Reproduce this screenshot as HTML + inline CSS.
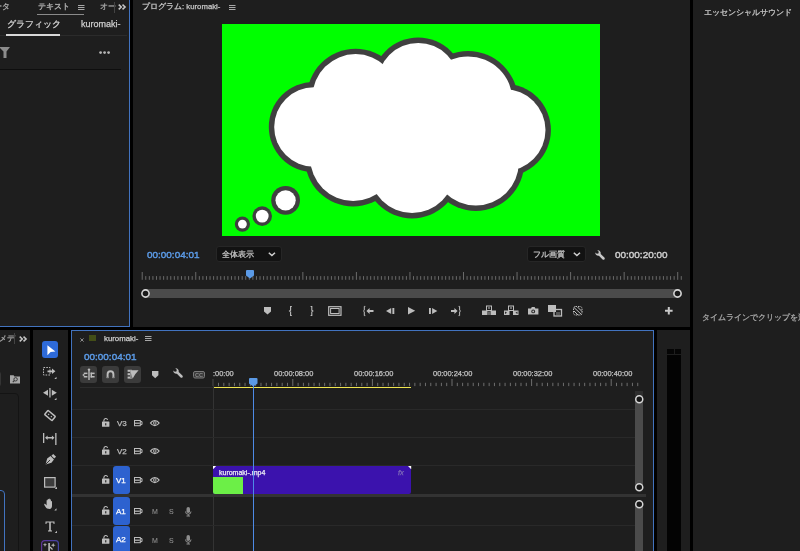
<!DOCTYPE html>
<html><head><meta charset="utf-8">
<style>
*{margin:0;padding:0;box-sizing:border-box}
html,body{width:800px;height:551px;overflow:hidden;background:#000;font-family:"Liberation Sans",sans-serif;color:#bdbdbd;position:relative}
.a{position:absolute}
.p{position:absolute;background:#1e1e1e;overflow:hidden}
.t{position:absolute;white-space:nowrap;line-height:1;-webkit-text-stroke:0.25px currentColor;will-change:transform}
svg{position:absolute;overflow:visible}
</style></head><body>

<div class="p" style="left:0;top:0;width:130px;height:327px;border-right:1px solid #4273bf;border-bottom:1px solid #4273bf"></div>
<div class="p" style="left:133px;top:0;width:557px;height:327px"></div>
<div class="p" style="left:693px;top:0;width:107px;height:551px"></div>
<div class="p" style="left:0;top:330px;width:30px;height:221px"></div>
<div class="p" style="left:33px;top:330px;width:35px;height:221px"></div>
<div class="p" style="left:71px;top:330px;width:583px;height:221px;border:1px solid #4273bf;border-bottom:none"></div>
<div class="p" style="left:657px;top:330px;width:33px;height:221px"></div>
<div class="t" style="left:-6.00px;top:3.46px;font-size:8.2px;color:#b4b4b4;font-weight:normal;">ータ</div>
<div class="t" style="left:38.00px;top:3.43px;font-size:8px;color:#bcbcbc;font-weight:normal;">テキスト</div>
<svg style="left:78px;top:5px;" width="7" height="6" viewBox="0 0 7 6"><g fill="#a8a8a8"><rect x="0" y="0" width="6.5" height="1"/><rect x="0" y="2" width="6.5" height="1"/><rect x="0" y="4" width="6.5" height="1"/></g></svg>
<div class="a" style="left:37px;top:13.5px;width:47px;height:1.5px;background:#8a8a8a;"></div>
<div class="t" style="left:100.00px;top:3.43px;font-size:8px;color:#a9a9a9;font-weight:normal;">オー</div>
<div class="a" style="left:114px;top:2px;width:1px;height:10.5px;background:#444;"></div>
<svg style="left:118.3px;top:4.2px;" width="9" height="6" viewBox="0 0 9 6"><path d="M.7 .6L3.3 3L.7 5.4M4.5 .6L7.1 3L4.5 5.4" fill="none" stroke="#c8c8c8" stroke-width="1.5"/></svg>
<div class="a" style="left:0px;top:35px;width:127px;height:1px;background:#2b2b2b;"></div>
<div class="t" style="left:7.00px;top:19.93px;font-size:9.3px;color:#d2d2d2;font-weight:normal;">グラフィック</div>
<div class="t" style="left:81.00px;top:20.18px;font-size:9px;color:#cfcfcf;font-weight:normal;">kuromaki-</div>
<div class="a" style="left:6px;top:34px;width:54px;height:2px;background:#d8d8d8;"></div>
<svg style="left:0px;top:47px;" width="11" height="12" viewBox="0 0 11 12"><path d="M-1 0H10L6.5 4.5V11H3.5V4.5Z" fill="#8c8c8c"/></svg>
<svg style="left:99px;top:51px;" width="13" height="4" viewBox="0 0 13 4"><circle cx="1.6" cy="1.6" r="1.4" fill="#b5b5b5"/><circle cx="5.6" cy="1.6" r="1.4" fill="#b5b5b5"/><circle cx="9.6" cy="1.6" r="1.4" fill="#b5b5b5"/></svg>
<div class="a" style="left:0px;top:69px;width:121px;height:1px;background:#0e0e0e;"></div>
<div class="t" style="left:141.75px;top:3.40px;font-size:7.8px;color:#c8c8c8;font-weight:normal;">プログラム: <span style="font-size:7.75px">kuromaki-</span></div>
<svg style="left:229px;top:5px;" width="7" height="6" viewBox="0 0 7 6"><g fill="#a8a8a8"><rect x="0" y="0" width="6.5" height="1"/><rect x="0" y="2" width="6.5" height="1"/><rect x="0" y="4" width="6.5" height="1"/></g></svg>
<svg style="left:222px;top:24px;" width="378" height="212" viewBox="0 0 378 212"><rect width="378" height="212" fill="#00ff00"/><g fill="#404040"><circle cx="133.6" cy="73.3" r="48.6"/><circle cx="196.2" cy="59.9" r="46.3"/><circle cx="246.0" cy="77.0" r="50.0"/><circle cx="282.6" cy="106.1" r="46.3"/><circle cx="253.8" cy="138.6" r="48.4"/><circle cx="190.1" cy="146.4" r="48.0"/><circle cx="131.2" cy="134.2" r="48.3"/><circle cx="91.9" cy="103.0" r="45.1"/><circle cx="63.6" cy="176.3" r="14.4"/><circle cx="40.2" cy="192.1" r="9.8"/><circle cx="20.4" cy="200.1" r="7.6"/></g><g fill="#fff"><circle cx="133.6" cy="73.3" r="43.2"/><circle cx="196.2" cy="59.9" r="40.9"/><circle cx="246.0" cy="77.0" r="44.6"/><circle cx="282.6" cy="106.1" r="40.9"/><circle cx="253.8" cy="138.6" r="43.0"/><circle cx="190.1" cy="146.4" r="42.6"/><circle cx="131.2" cy="134.2" r="42.9"/><circle cx="91.9" cy="103.0" r="39.7"/><circle cx="63.6" cy="176.3" r="10.1"/><circle cx="40.2" cy="192.1" r="6.4"/><circle cx="20.4" cy="200.1" r="4.4"/><rect x="89" y="73.9" width="193.60000000000002" height="64.69999999999999"/></g></svg>
<div class="t" style="left:146.50px;top:249.68px;font-size:9.95px;color:#5b9ae6;font-weight:normal;-webkit-text-stroke:0.45px currentColor">00:00:04:01</div>
<div class="a" style="left:216px;top:246.3px;width:65.7px;height:15.6px;background:#121212;border-radius:3px;border:1px solid #262626"></div>
<div class="t" style="left:222.00px;top:251.02px;font-size:8.25px;color:#c6c6c6;font-weight:normal;">全体表示</div>
<svg style="left:268px;top:252.3px;" width="8" height="5" viewBox="0 0 8 5"><path d="M.8 .8L3.9 3.6L7 .8" fill="none" stroke="#d0d0d0" stroke-width="1.5"/></svg>
<div class="a" style="left:526.6px;top:246.3px;width:59.4px;height:15.6px;background:#121212;border-radius:3px;border:1px solid #262626"></div>
<div class="t" style="left:533.00px;top:251.23px;font-size:8px;color:#c6c6c6;font-weight:normal;">フル画質</div>
<svg style="left:573px;top:252.3px;" width="8" height="5" viewBox="0 0 8 5"><path d="M.8 .8L3.9 3.6L7 .8" fill="none" stroke="#d0d0d0" stroke-width="1.5"/></svg>
<svg style="left:595.4px;top:249.6px;" width="10" height="10" viewBox="0 0 10 10"><g transform="translate(10 0) scale(-1 1)"><path d="M7.6 .4A2.9 2.9 0 0 0 4.3 3.9L.6 7.6A1 1 0 0 0 2.4 9.4L6.1 5.7A2.9 2.9 0 0 0 9.6 2.4L8.2 3.8L6.6 3.4L6.2 1.8Z" fill="#c8c8c8"/></g></svg>
<div class="t" style="left:614.50px;top:249.68px;font-size:9.95px;color:#cccccc;font-weight:normal;-webkit-text-stroke:0.45px currentColor">00:00:20:00</div>
<svg style="left:133px;top:271.6px;" width="557" height="8" viewBox="0 0 557 8"><g fill="#6a6a6a"><rect x="8.70" y="0" width="1" height="7.8"/><rect x="12.27" y="4.1" width="1" height="3.7"/><rect x="15.84" y="4.1" width="1" height="3.7"/><rect x="19.41" y="4.1" width="1" height="3.7"/><rect x="22.98" y="4.1" width="1" height="3.7"/><rect x="26.55" y="4.1" width="1" height="3.7"/><rect x="30.12" y="4.1" width="1" height="3.7"/><rect x="33.69" y="4.1" width="1" height="3.7"/><rect x="37.26" y="4.1" width="1" height="3.7"/><rect x="40.83" y="4.1" width="1" height="3.7"/><rect x="44.40" y="4.1" width="1" height="3.7"/><rect x="47.97" y="4.1" width="1" height="3.7"/><rect x="51.54" y="4.1" width="1" height="3.7"/><rect x="55.11" y="4.1" width="1" height="3.7"/><rect x="58.68" y="4.1" width="1" height="3.7"/><rect x="62.25" y="0" width="1" height="7.8"/><rect x="65.82" y="4.1" width="1" height="3.7"/><rect x="69.39" y="4.1" width="1" height="3.7"/><rect x="72.96" y="4.1" width="1" height="3.7"/><rect x="76.53" y="4.1" width="1" height="3.7"/><rect x="80.10" y="4.1" width="1" height="3.7"/><rect x="83.67" y="4.1" width="1" height="3.7"/><rect x="87.24" y="4.1" width="1" height="3.7"/><rect x="90.81" y="4.1" width="1" height="3.7"/><rect x="94.38" y="4.1" width="1" height="3.7"/><rect x="97.95" y="4.1" width="1" height="3.7"/><rect x="101.52" y="4.1" width="1" height="3.7"/><rect x="105.09" y="4.1" width="1" height="3.7"/><rect x="108.66" y="4.1" width="1" height="3.7"/><rect x="112.23" y="4.1" width="1" height="3.7"/><rect x="115.80" y="0" width="1" height="7.8"/><rect x="119.37" y="4.1" width="1" height="3.7"/><rect x="122.94" y="4.1" width="1" height="3.7"/><rect x="126.51" y="4.1" width="1" height="3.7"/><rect x="130.08" y="4.1" width="1" height="3.7"/><rect x="133.65" y="4.1" width="1" height="3.7"/><rect x="137.22" y="4.1" width="1" height="3.7"/><rect x="140.79" y="4.1" width="1" height="3.7"/><rect x="144.36" y="4.1" width="1" height="3.7"/><rect x="147.93" y="4.1" width="1" height="3.7"/><rect x="151.50" y="4.1" width="1" height="3.7"/><rect x="155.07" y="4.1" width="1" height="3.7"/><rect x="158.64" y="4.1" width="1" height="3.7"/><rect x="162.21" y="4.1" width="1" height="3.7"/><rect x="165.78" y="4.1" width="1" height="3.7"/><rect x="169.35" y="0" width="1" height="7.8"/><rect x="172.92" y="4.1" width="1" height="3.7"/><rect x="176.49" y="4.1" width="1" height="3.7"/><rect x="180.06" y="4.1" width="1" height="3.7"/><rect x="183.63" y="4.1" width="1" height="3.7"/><rect x="187.20" y="4.1" width="1" height="3.7"/><rect x="190.77" y="4.1" width="1" height="3.7"/><rect x="194.34" y="4.1" width="1" height="3.7"/><rect x="197.91" y="4.1" width="1" height="3.7"/><rect x="201.48" y="4.1" width="1" height="3.7"/><rect x="205.05" y="4.1" width="1" height="3.7"/><rect x="208.62" y="4.1" width="1" height="3.7"/><rect x="212.19" y="4.1" width="1" height="3.7"/><rect x="215.76" y="4.1" width="1" height="3.7"/><rect x="219.33" y="4.1" width="1" height="3.7"/><rect x="222.90" y="0" width="1" height="7.8"/><rect x="226.47" y="4.1" width="1" height="3.7"/><rect x="230.04" y="4.1" width="1" height="3.7"/><rect x="233.61" y="4.1" width="1" height="3.7"/><rect x="237.18" y="4.1" width="1" height="3.7"/><rect x="240.75" y="4.1" width="1" height="3.7"/><rect x="244.32" y="4.1" width="1" height="3.7"/><rect x="247.89" y="4.1" width="1" height="3.7"/><rect x="251.46" y="4.1" width="1" height="3.7"/><rect x="255.03" y="4.1" width="1" height="3.7"/><rect x="258.60" y="4.1" width="1" height="3.7"/><rect x="262.17" y="4.1" width="1" height="3.7"/><rect x="265.74" y="4.1" width="1" height="3.7"/><rect x="269.31" y="4.1" width="1" height="3.7"/><rect x="272.88" y="4.1" width="1" height="3.7"/><rect x="276.45" y="0" width="1" height="7.8"/><rect x="280.02" y="4.1" width="1" height="3.7"/><rect x="283.59" y="4.1" width="1" height="3.7"/><rect x="287.16" y="4.1" width="1" height="3.7"/><rect x="290.73" y="4.1" width="1" height="3.7"/><rect x="294.30" y="4.1" width="1" height="3.7"/><rect x="297.87" y="4.1" width="1" height="3.7"/><rect x="301.44" y="4.1" width="1" height="3.7"/><rect x="305.01" y="4.1" width="1" height="3.7"/><rect x="308.58" y="4.1" width="1" height="3.7"/><rect x="312.15" y="4.1" width="1" height="3.7"/><rect x="315.72" y="4.1" width="1" height="3.7"/><rect x="319.29" y="4.1" width="1" height="3.7"/><rect x="322.86" y="4.1" width="1" height="3.7"/><rect x="326.43" y="4.1" width="1" height="3.7"/><rect x="330.00" y="0" width="1" height="7.8"/><rect x="333.57" y="4.1" width="1" height="3.7"/><rect x="337.14" y="4.1" width="1" height="3.7"/><rect x="340.71" y="4.1" width="1" height="3.7"/><rect x="344.28" y="4.1" width="1" height="3.7"/><rect x="347.85" y="4.1" width="1" height="3.7"/><rect x="351.42" y="4.1" width="1" height="3.7"/><rect x="354.99" y="4.1" width="1" height="3.7"/><rect x="358.56" y="4.1" width="1" height="3.7"/><rect x="362.13" y="4.1" width="1" height="3.7"/><rect x="365.70" y="4.1" width="1" height="3.7"/><rect x="369.27" y="4.1" width="1" height="3.7"/><rect x="372.84" y="4.1" width="1" height="3.7"/><rect x="376.41" y="4.1" width="1" height="3.7"/><rect x="379.98" y="4.1" width="1" height="3.7"/><rect x="383.55" y="0" width="1" height="7.8"/><rect x="387.12" y="4.1" width="1" height="3.7"/><rect x="390.69" y="4.1" width="1" height="3.7"/><rect x="394.26" y="4.1" width="1" height="3.7"/><rect x="397.83" y="4.1" width="1" height="3.7"/><rect x="401.40" y="4.1" width="1" height="3.7"/><rect x="404.97" y="4.1" width="1" height="3.7"/><rect x="408.54" y="4.1" width="1" height="3.7"/><rect x="412.11" y="4.1" width="1" height="3.7"/><rect x="415.68" y="4.1" width="1" height="3.7"/><rect x="419.25" y="4.1" width="1" height="3.7"/><rect x="422.82" y="4.1" width="1" height="3.7"/><rect x="426.39" y="4.1" width="1" height="3.7"/><rect x="429.96" y="4.1" width="1" height="3.7"/><rect x="433.53" y="4.1" width="1" height="3.7"/><rect x="437.10" y="0" width="1" height="7.8"/><rect x="440.67" y="4.1" width="1" height="3.7"/><rect x="444.24" y="4.1" width="1" height="3.7"/><rect x="447.81" y="4.1" width="1" height="3.7"/><rect x="451.38" y="4.1" width="1" height="3.7"/><rect x="454.95" y="4.1" width="1" height="3.7"/><rect x="458.52" y="4.1" width="1" height="3.7"/><rect x="462.09" y="4.1" width="1" height="3.7"/><rect x="465.66" y="4.1" width="1" height="3.7"/><rect x="469.23" y="4.1" width="1" height="3.7"/><rect x="472.80" y="4.1" width="1" height="3.7"/><rect x="476.37" y="4.1" width="1" height="3.7"/><rect x="479.94" y="4.1" width="1" height="3.7"/><rect x="483.51" y="4.1" width="1" height="3.7"/><rect x="487.08" y="4.1" width="1" height="3.7"/><rect x="490.65" y="0" width="1" height="7.8"/><rect x="494.22" y="4.1" width="1" height="3.7"/><rect x="497.79" y="4.1" width="1" height="3.7"/><rect x="501.36" y="4.1" width="1" height="3.7"/><rect x="504.93" y="4.1" width="1" height="3.7"/><rect x="508.50" y="4.1" width="1" height="3.7"/><rect x="512.07" y="4.1" width="1" height="3.7"/><rect x="515.64" y="4.1" width="1" height="3.7"/><rect x="519.21" y="4.1" width="1" height="3.7"/><rect x="522.78" y="4.1" width="1" height="3.7"/><rect x="526.35" y="4.1" width="1" height="3.7"/><rect x="529.92" y="4.1" width="1" height="3.7"/><rect x="533.49" y="4.1" width="1" height="3.7"/><rect x="537.06" y="4.1" width="1" height="3.7"/><rect x="540.63" y="4.1" width="1" height="3.7"/><rect x="544.20" y="0" width="1" height="7.8"/><rect x="547.77" y="4.1" width="1" height="3.7"/></g></svg>
<svg style="left:246px;top:270px;" width="8" height="9" viewBox="0 0 8 9"><path d="M0 1A1 1 0 0 1 1 0H7A1 1 0 0 1 8 1V5.5L4 8.5L0 5.5Z" fill="#5b9ae6"/></svg>
<div class="a" style="left:141.5px;top:289px;width:540.5px;height:9px;background:#4b4b4b;border-radius:4.5px"></div>
<svg style="left:141.1px;top:289px;" width="9" height="9" viewBox="0 0 9 9"><circle cx="4.5" cy="4.5" r="3.6" fill="#1a1a1a" stroke="#d6d6d6" stroke-width="1.6"/></svg>
<svg style="left:673.2px;top:289px;" width="9" height="9" viewBox="0 0 9 9"><circle cx="4.5" cy="4.5" r="3.6" fill="#1a1a1a" stroke="#d6d6d6" stroke-width="1.6"/></svg>
<svg style="left:264.3px;top:307px;" width="7" height="7.5" viewBox="0 0 7 7.5"><path d="M0 0H7V4.5L3.5 7.5L0 4.5Z" fill="#bdbdbd"/></svg>
<svg style="left:289px;top:306px;" width="4" height="10" viewBox="0 0 4 10"><path d="M2.8 .5H1.6V4.3L.6 5L1.6 5.7V9.5H2.8" fill="none" stroke="#bdbdbd" stroke-width="1.1"/></svg>
<svg style="left:309.5px;top:306px;" width="4" height="10" viewBox="0 0 4 10"><path d="M.6 .5H1.8V4.3L2.8 5L1.8 5.7V9.5H.6" fill="none" stroke="#bdbdbd" stroke-width="1.1"/></svg>
<svg style="left:327.7px;top:305.8px;" width="14" height="10" viewBox="0 0 14 10"><rect x=".7" y=".7" width="12.3" height="8.6" fill="none" stroke="#bdbdbd" stroke-width="1.2"/><rect x="2.6" y="2.5" width="8.5" height="5" fill="none" stroke="#bdbdbd" stroke-width="1"/></svg>
<svg style="left:362.6px;top:305.5px;" width="11" height="10" viewBox="0 0 11 10"><path d="M2.3 .4H1.3V4.3L.4 5L1.3 5.7V9.6H2.3" fill="none" stroke="#bdbdbd" stroke-width="1"/><path d="M3.4 5L6.6 1.9V3.9H10.5V6.1H6.6V8.1Z" fill="#bdbdbd"/></svg>
<svg style="left:385.7px;top:308px;" width="9" height="6" viewBox="0 0 9 6"><path d="M5.2 0V6L0 3Z" fill="#bdbdbd"/><rect x="6.4" y="0" width="1.9" height="6" fill="#bdbdbd"/></svg>
<svg style="left:407.8px;top:307px;" width="8" height="7.5" viewBox="0 0 8 7.5"><path d="M0 0L7.2 3.75L0 7.5Z" fill="#bdbdbd"/></svg>
<svg style="left:429.2px;top:308px;" width="9" height="6" viewBox="0 0 9 6"><rect x="0" y="0" width="1.9" height="6" fill="#bdbdbd"/><path d="M3.1 0V6L8.3 3Z" fill="#bdbdbd"/></svg>
<svg style="left:450.7px;top:305.5px;" width="11" height="10" viewBox="0 0 11 10"><path d="M7.6 .4H8.6V4.3L9.6 5L8.6 5.7V9.6H7.6" fill="none" stroke="#bdbdbd" stroke-width="1"/><path d="M6.6 5L3.4 1.9V3.9H0V6.1H3.4V8.1Z" fill="#bdbdbd"/></svg>
<svg style="left:481.7px;top:305.5px;" width="14" height="9" viewBox="0 0 14 9"><rect x="4.5" y="0" width="5" height="4.5" fill="none" stroke="#bdbdbd" stroke-width="1"/><rect x="6" y="1.5" width="2" height="1" fill="#bdbdbd"/><rect x="0" y="4.5" width="5.5" height="4.5" fill="#bdbdbd"/><rect x="8.5" y="4.5" width="5.5" height="4.5" fill="#bdbdbd"/><rect x="5.5" y="5.5" width="3" height="3.5" fill="#6a6a6a"/></svg>
<svg style="left:503.7px;top:305.5px;" width="15" height="9" viewBox="0 0 15 9"><rect x="4.5" y="0" width="5" height="4.5" fill="none" stroke="#bdbdbd" stroke-width="1"/><rect x="6" y="1.5" width="2" height="1" fill="#bdbdbd"/><rect x="0" y="4.5" width="5.5" height="4.5" fill="#bdbdbd"/><rect x="9" y="4.5" width="5.5" height="4.5" fill="#bdbdbd"/><path d="M1 5.5L3 6.75L1 8Z" fill="#2a2a2a"/><path d="M13.5 5.5L11.5 6.75L13.5 8Z" fill="#2a2a2a"/></svg>
<svg style="left:527.8px;top:306.8px;" width="11" height="8" viewBox="0 0 11 8"><path d="M0 1.6H3L3.8 0H6.6L7.4 1.6H10.4V7.4H0Z" fill="#bdbdbd"/><circle cx="5.2" cy="4.4" r="1.9" fill="#2a2a2a"/><circle cx="5.2" cy="4.4" r=".9" fill="#bdbdbd"/></svg>
<svg style="left:548px;top:304.8px;" width="14" height="11.5" viewBox="0 0 14 11.5"><rect x="0" y="0" width="8" height="7" fill="#bdbdbd"/><rect x="6" y="4.5" width="7.5" height="6.5" fill="none" stroke="#bdbdbd" stroke-width="1.3"/><rect x="8" y="7" width="4" height="3" fill="#555"/></svg>
<svg style="left:573px;top:306px;" width="10" height="9.5" viewBox="0 0 10 9.5"><g fill="none" stroke="#bdbdbd" stroke-width="1"><path d="M1 1.5L8.5 8.5M1 5L5 9M4.5 1L9 5.5"/><rect x=".5" y=".5" width="8.5" height="8.5" rx="2" stroke-dasharray="1.5 1"/></g></svg>
<svg style="left:665px;top:307px;" width="8" height="8" viewBox="0 0 8 8"><path d="M3.8 0V7.6M0 3.8H7.6" stroke="#c8c8c8" stroke-width="2"/></svg>
<div class="t" style="left:704.00px;top:8.86px;font-size:8.2px;color:#c8c8c8;font-weight:normal;">エッセンシャルサウンド</div>
<div class="t" style="left:701.80px;top:313.94px;font-size:8.1px;color:#a8a8a8;font-weight:normal;">タイムラインでクリップを選択</div>
<div class="t" style="left:-1.00px;top:335.03px;font-size:8px;color:#a9a9a9;font-weight:normal;">メデ</div>
<div class="a" style="left:14px;top:333px;width:1px;height:11px;background:#444;"></div>
<svg style="left:19px;top:336px;" width="9" height="6" viewBox="0 0 9 6"><path d="M.7 .6L3.3 3L.7 5.4M4.5 .6L7.1 3L4.5 5.4" fill="none" stroke="#c8c8c8" stroke-width="1.5"/></svg>
<div class="a" style="left:-20px;top:371px;width:21px;height:15.5px;background:transparent;border:1px solid #343434;border-radius:3px"></div>
<svg style="left:10px;top:374.8px;" width="10" height="8.5" viewBox="0 0 10 8.5"><path d="M0 .3H3.6L4.4 1.4H10V8.4H0Z" fill="#a8a8a8"/><circle cx="5.6" cy="4.3" r="1.7" fill="none" stroke="#3a3a3a" stroke-width="1"/><path d="M4.4 5.5L2.8 7.2" stroke="#3a3a3a" stroke-width="1.1"/></svg>
<div class="a" style="left:-20px;top:393.4px;width:39px;height:170px;background:transparent;border:1px solid #141414;border-radius:4px"></div>
<div class="a" style="left:-20px;top:490px;width:24.5px;height:80px;background:transparent;border:1.5px solid #4273bf;border-radius:4px"></div>
<div class="a" style="left:41.5px;top:341px;width:16.7px;height:16.8px;background:#2e6ad8;border-radius:3px"></div>
<svg style="left:41.5px;top:341px;" width="17" height="17" viewBox="0 0 17 17"><path d="M5.4 4.2V14.2L8.6 11L13.4 10.6Z" fill="#fff"/></svg>
<svg style="left:43px;top:367px;" width="14" height="12" viewBox="0 0 14 12"><rect x=".5" y=".5" width="6.5" height="7.5" fill="none" stroke="#bdbdbd" stroke-width="1" stroke-dasharray="1.6 1.2"/><path d="M4.5 3.4H9V1.6L12.4 4.3L9 7V5.2H4.5Z" fill="#bdbdbd"/><path d="M13.5 12L13.5 9.8L11.3 12Z" fill="#bdbdbd"/></svg>
<svg style="left:43px;top:388px;" width="14" height="12" viewBox="0 0 14 12"><rect x="6.3" y="0" width="1.3" height="9.5" fill="#bdbdbd"/><path d="M0 4.8L5 1.8V7.8Z" fill="#bdbdbd"/><path d="M13.8 4.8L8.8 1.8V7.8Z" fill="#bdbdbd"/><path d="M13.5 12L13.5 9.8L11.3 12Z" fill="#bdbdbd"/></svg>
<svg style="left:44px;top:410px;" width="12" height="11" viewBox="0 0 12 11"><g transform="rotate(40 6 5.5)"><rect x="1.2" y="2.8" width="9.6" height="5.4" rx=".6" fill="none" stroke="#bdbdbd" stroke-width="1.5"/><rect x="3.6" y="4.8" width="1.2" height="1.4" fill="#bdbdbd"/><rect x="7.2" y="4.8" width="1.2" height="1.4" fill="#bdbdbd"/></g></svg>
<svg style="left:43px;top:433px;" width="14" height="13" viewBox="0 0 14 13"><rect x="0" y="0" width="1.3" height="10" fill="#bdbdbd"/><rect x="12.2" y="0" width="1.3" height="12" fill="#bdbdbd"/><path d="M2 4.8L4.6 2.6V4.1H8.9V2.6L11.5 4.8L8.9 7V5.5H4.6V7Z" fill="#bdbdbd"/></svg>
<svg style="left:44px;top:454px;" width="12" height="12" viewBox="0 0 12 12"><g transform="rotate(45 6 6)"><rect x="4" y="-.6" width="4" height="2.6" fill="#bdbdbd"/><path d="M3.6 2.8H8.4L9 7L6 12.2L3 7Z" fill="#bdbdbd"/><path d="M6 6V12" stroke="#1e1e1e" stroke-width=".8"/></g></svg>
<svg style="left:44px;top:477px;" width="13" height="12" viewBox="0 0 13 12"><rect x=".6" y=".6" width="10.5" height="9.5" fill="#3c3c3c" stroke="#bdbdbd" stroke-width="1.2"/><path d="M13 12L13 9.8L10.8 12Z" fill="#bdbdbd"/></svg>
<svg style="left:44px;top:498px;" width="13" height="13" viewBox="0 0 13 13"><path d="M3 10.5C1.8 9.4 .6 7.6 .2 6.4C0 5.8 .8 5.4 1.3 6L2.6 7.4V2.4C2.6 1.7 3.6 1.7 3.6 2.4V5.6V1.4C3.6.7 4.7.7 4.7 1.4V5.4V1C4.7.3 5.8.3 5.8 1V5.4V1.8C5.8 1.1 6.9 1.1 6.9 1.8V5.8V3.4C6.9 2.7 8 2.7 8 3.4V7.8C8 9.6 7.2 11 5.6 11Z" fill="#bdbdbd"/><path d="M12.5 12.5L12.5 10.3L10.3 12.5Z" fill="#bdbdbd"/></svg>
<svg style="left:45px;top:521px;" width="12" height="12" viewBox="0 0 12 12"><path d="M.5 .5H9.5V3H8.6L8.3 1.6H5.8V9.2L7 9.6V10.4H3V9.6L4.2 9.2V1.6H1.7L1.4 3H.5Z" fill="#bdbdbd"/><path d="M12 12L12 9.8L9.8 12Z" fill="#bdbdbd"/></svg>
<svg style="left:41px;top:539.8px;" width="18" height="18" viewBox="0 0 18 18"><defs><linearGradient id="rg" x1="0" y1="0" x2="1" y2="0"><stop offset="0" stop-color="#5e3498"/><stop offset="1" stop-color="#4545a6"/></linearGradient></defs><rect x=".6" y=".6" width="16.8" height="16.8" rx="3" fill="none" stroke="url(#rg)" stroke-width="1.2"/></svg>
<svg style="left:41px;top:540px;" width="18" height="12" viewBox="0 0 18 12"><path d="M4 2.5999999999999996Q4 4.8 6.2 4.8Q4 4.8 4 7.0Q4 4.8 1.7999999999999998 4.8Q4 4.8 4 2.5999999999999996Z" fill="#bdbdbd"/><path d="M12.2 2.8000000000000003Q12.2 5.2 14.6 5.2Q12.2 5.2 12.2 7.6Q12.2 5.2 9.799999999999999 5.2Q12.2 5.2 12.2 2.8000000000000003Z" fill="#bdbdbd"/><rect x="7.3" y="3" width="1.6" height="9" fill="#bdbdbd"/><path d="M9 7L11.5 9.5" stroke="#bdbdbd" stroke-width="1.3"/></svg>
<svg style="left:79.5px;top:337.5px;" width="4" height="4" viewBox="0 0 4 4"><path d="M.4 .4L3.6 3.6M3.6 .4L.4 3.6" stroke="#9a9a9a" stroke-width=".9"/></svg>
<div class="a" style="left:89px;top:334.6px;width:7px;height:6.6px;background:#434e17;"></div>
<div class="t" style="left:103.60px;top:335.40px;font-size:7.8px;color:#cfcfcf;font-weight:normal;">kuromaki-</div>
<svg style="left:145px;top:336px;" width="7" height="6" viewBox="0 0 7 6"><g fill="#a8a8a8"><rect x="0" y="0" width="6.5" height="1"/><rect x="0" y="2" width="6.5" height="1"/><rect x="0" y="4" width="6.5" height="1"/></g></svg>
<div class="t" style="left:84.00px;top:351.68px;font-size:9.95px;color:#5b9ae6;font-weight:normal;-webkit-text-stroke:0.45px currentColor">00:00:04:01</div>
<div class="a" style="left:80px;top:366px;width:17px;height:16.8px;background:#3b3b3b;border-radius:3px"></div>
<div class="a" style="left:102px;top:366px;width:17px;height:16.8px;background:#3b3b3b;border-radius:3px"></div>
<div class="a" style="left:124px;top:366px;width:17px;height:16.8px;background:#3b3b3b;border-radius:3px"></div>
<svg style="left:80px;top:366px;" width="17" height="17" viewBox="0 0 17 17"><g fill="#bdbdbd"><circle cx="9" cy="3.6" r="1.2"/><rect x="8.3" y="4" width="1.4" height="10"/><rect x="3.8" y="6.6" width="3.6" height="1.5"/><rect x="3.8" y="10" width="3.6" height="1.5"/><path d="M2.2 9L4.4 7.6V10.4Z"/><rect x="10.6" y="6.6" width="4" height="1.5"/><rect x="10.6" y="10" width="4" height="1.5"/><rect x="10.6" y="6.6" width="1.4" height="4.9"/></g></svg>
<svg style="left:102px;top:366px;" width="17" height="17" viewBox="0 0 17 17"><path d="M5.6 12V8.2A2.9 2.9 0 0 1 11.4 8.2V12" fill="none" stroke="#bdbdbd" stroke-width="1.9"/><rect x="4.6" y="10.8" width="2" height="1.4" fill="#8a8a8a"/><rect x="10.4" y="10.8" width="2" height="1.4" fill="#8a8a8a"/></svg>
<svg style="left:124px;top:366px;" width="17" height="17" viewBox="0 0 17 17"><g fill="#bdbdbd"><rect x="3.6" y="3.8" width="2.4" height="2"/><rect x="3.6" y="7.2" width="2.4" height="2"/><rect x="3.6" y="10.6" width="2.4" height="2"/></g><rect x="6.4" y="3.6" width="1.1" height="9.4" fill="#bdbdbd"/><path d="M6.2 4.2H14.6L11.2 8.2L8.6 12.8Z" fill="#bdbdbd"/></svg>
<svg style="left:151.6px;top:371px;" width="7" height="7.5" viewBox="0 0 7 7.5"><path d="M0 0H6.4V4.3L3.2 7.2L0 4.3Z" fill="#bdbdbd"/></svg>
<svg style="left:172px;top:367.5px;" width="11" height="11" viewBox="0 0 11 11"><g transform="translate(11 0) scale(-1 1)"><path d="M7.6 .4A2.9 2.9 0 0 0 4.3 3.9L.6 7.6A1 1 0 0 0 2.4 9.4L6.1 5.7A2.9 2.9 0 0 0 9.6 2.4L8.2 3.8L6.6 3.4L6.2 1.8Z" fill="#bdbdbd"/></g></svg>
<svg style="left:193px;top:371px;" width="12" height="7.5" viewBox="0 0 12 7.5"><rect x=".5" y=".5" width="11" height="6.5" rx="1.5" fill="#3a3a3a" stroke="#7a7a7a" stroke-width="1"/><text x="6" y="5.9" font-size="5.6" font-weight="bold" text-anchor="middle" fill="#8a8a8a" font-family="Liberation Sans">CC</text></svg>
<div class="a" style="left:80px;top:387px;width:133px;height:1px;background:#2c2c2c;"></div>
<div class="t" style="left:213.00px;top:370.29px;font-size:7.45px;color:#c4c4c4;font-weight:normal;">:00:00</div>
<div class="t" style="left:274.00px;top:370.29px;font-size:7.45px;color:#c4c4c4;font-weight:normal;">00:00:08:00</div>
<div class="t" style="left:353.60px;top:370.29px;font-size:7.45px;color:#c4c4c4;font-weight:normal;">00:00:16:00</div>
<div class="t" style="left:433.20px;top:370.29px;font-size:7.45px;color:#c4c4c4;font-weight:normal;">00:00:24:00</div>
<div class="t" style="left:512.80px;top:370.29px;font-size:7.45px;color:#c4c4c4;font-weight:normal;">00:00:32:00</div>
<div class="t" style="left:592.60px;top:370.29px;font-size:7.45px;color:#c4c4c4;font-weight:normal;">00:00:40:00</div>
<svg style="left:213px;top:379px;" width="430" height="8" viewBox="0 0 430 8"><g fill="#6e6e6e"><rect x="-0.30" y="0" width="1" height="7"/><rect x="5.01" y="3.8" width="1" height="3.3"/><rect x="10.31" y="3.8" width="1" height="3.3"/><rect x="15.62" y="3.8" width="1" height="3.3"/><rect x="20.93" y="3.8" width="1" height="3.3"/><rect x="26.23" y="3.8" width="1" height="3.3"/><rect x="31.54" y="3.8" width="1" height="3.3"/><rect x="36.85" y="3.8" width="1" height="3.3"/><rect x="42.15" y="3.8" width="1" height="3.3"/><rect x="47.46" y="3.8" width="1" height="3.3"/><rect x="52.77" y="3.8" width="1" height="3.3"/><rect x="58.07" y="3.8" width="1" height="3.3"/><rect x="63.38" y="3.8" width="1" height="3.3"/><rect x="68.69" y="3.8" width="1" height="3.3"/><rect x="73.99" y="3.8" width="1" height="3.3"/><rect x="79.30" y="0" width="1" height="7"/><rect x="84.61" y="3.8" width="1" height="3.3"/><rect x="89.91" y="3.8" width="1" height="3.3"/><rect x="95.22" y="3.8" width="1" height="3.3"/><rect x="100.53" y="3.8" width="1" height="3.3"/><rect x="105.83" y="3.8" width="1" height="3.3"/><rect x="111.14" y="3.8" width="1" height="3.3"/><rect x="116.45" y="3.8" width="1" height="3.3"/><rect x="121.75" y="3.8" width="1" height="3.3"/><rect x="127.06" y="3.8" width="1" height="3.3"/><rect x="132.37" y="3.8" width="1" height="3.3"/><rect x="137.67" y="3.8" width="1" height="3.3"/><rect x="142.98" y="3.8" width="1" height="3.3"/><rect x="148.29" y="3.8" width="1" height="3.3"/><rect x="153.59" y="3.8" width="1" height="3.3"/><rect x="158.90" y="0" width="1" height="7"/><rect x="164.21" y="3.8" width="1" height="3.3"/><rect x="169.51" y="3.8" width="1" height="3.3"/><rect x="174.82" y="3.8" width="1" height="3.3"/><rect x="180.13" y="3.8" width="1" height="3.3"/><rect x="185.43" y="3.8" width="1" height="3.3"/><rect x="190.74" y="3.8" width="1" height="3.3"/><rect x="196.05" y="3.8" width="1" height="3.3"/><rect x="201.35" y="3.8" width="1" height="3.3"/><rect x="206.66" y="3.8" width="1" height="3.3"/><rect x="211.97" y="3.8" width="1" height="3.3"/><rect x="217.27" y="3.8" width="1" height="3.3"/><rect x="222.58" y="3.8" width="1" height="3.3"/><rect x="227.89" y="3.8" width="1" height="3.3"/><rect x="233.19" y="3.8" width="1" height="3.3"/><rect x="238.50" y="0" width="1" height="7"/><rect x="243.81" y="3.8" width="1" height="3.3"/><rect x="249.11" y="3.8" width="1" height="3.3"/><rect x="254.42" y="3.8" width="1" height="3.3"/><rect x="259.73" y="3.8" width="1" height="3.3"/><rect x="265.03" y="3.8" width="1" height="3.3"/><rect x="270.34" y="3.8" width="1" height="3.3"/><rect x="275.65" y="3.8" width="1" height="3.3"/><rect x="280.95" y="3.8" width="1" height="3.3"/><rect x="286.26" y="3.8" width="1" height="3.3"/><rect x="291.57" y="3.8" width="1" height="3.3"/><rect x="296.87" y="3.8" width="1" height="3.3"/><rect x="302.18" y="3.8" width="1" height="3.3"/><rect x="307.49" y="3.8" width="1" height="3.3"/><rect x="312.79" y="3.8" width="1" height="3.3"/><rect x="318.10" y="0" width="1" height="7"/><rect x="323.41" y="3.8" width="1" height="3.3"/><rect x="328.71" y="3.8" width="1" height="3.3"/><rect x="334.02" y="3.8" width="1" height="3.3"/><rect x="339.33" y="3.8" width="1" height="3.3"/><rect x="344.63" y="3.8" width="1" height="3.3"/><rect x="349.94" y="3.8" width="1" height="3.3"/><rect x="355.25" y="3.8" width="1" height="3.3"/><rect x="360.55" y="3.8" width="1" height="3.3"/><rect x="365.86" y="3.8" width="1" height="3.3"/><rect x="371.17" y="3.8" width="1" height="3.3"/><rect x="376.47" y="3.8" width="1" height="3.3"/><rect x="381.78" y="3.8" width="1" height="3.3"/><rect x="387.09" y="3.8" width="1" height="3.3"/><rect x="392.39" y="3.8" width="1" height="3.3"/><rect x="397.70" y="0" width="1" height="7"/><rect x="403.01" y="3.8" width="1" height="3.3"/><rect x="408.31" y="3.8" width="1" height="3.3"/><rect x="413.62" y="3.8" width="1" height="3.3"/><rect x="418.93" y="3.8" width="1" height="3.3"/><rect x="424.23" y="3.8" width="1" height="3.3"/></g></svg>
<div class="a" style="left:213px;top:386.5px;width:197.5px;height:1.75px;background:#efe54e;"></div>
<div class="a" style="left:212.5px;top:379px;width:1px;height:172px;background:#333;"></div>
<div class="a" style="left:72px;top:409px;width:563px;height:1px;background:#292929;"></div>
<div class="a" style="left:72px;top:437px;width:563px;height:1px;background:#292929;"></div>
<div class="a" style="left:72px;top:465px;width:563px;height:1px;background:#292929;"></div>
<div class="a" style="left:72px;top:525px;width:563px;height:1px;background:#292929;"></div>
<div class="a" style="left:72px;top:494px;width:574px;height:3px;background:#333;"></div>
<div class="a" style="left:213px;top:466px;width:198px;height:28px;background:#3b12ad;border-radius:1px 1px 2px 2px"></div>
<div class="a" style="left:213px;top:477px;width:29.5px;height:17px;background:#6cef47;border-bottom-left-radius:2px"></div>
<svg style="left:213px;top:466px;" width="4" height="4" viewBox="0 0 4 4"><path d="M0 0H3.2L0 3.2Z" fill="#fff"/></svg>
<svg style="left:407.8px;top:466px;" width="4" height="4" viewBox="0 0 4 4"><path d="M3.2 0H0L3.2 3.2Z" fill="#fff"/></svg>
<div class="t" style="left:218.50px;top:468.97px;font-size:7px;color:#ececf4;font-weight:normal;">kuromaki-.mp4</div>
<div class="t" style="left:397.50px;top:469.15px;font-size:7.5px;color:#7f6cb8;font-weight:normal;font-style:italic">fx</div>
<div class="a" style="left:253px;top:386px;width:1px;height:165px;background:#4d8ae6;"></div>
<svg style="left:249px;top:378px;" width="8.5" height="9" viewBox="0 0 8.5 9"><path d="M0 1A1 1 0 0 1 1 0H7.5A1 1 0 0 1 8.5 1V5.6L4.25 8.6L0 5.6Z" fill="#5b9ae6"/></svg>
<svg style="left:101.8px;top:418px;" width="8" height="9" viewBox="0 0 8 9"><path d="M1.9 3.8V2.3A1.9 1.9 0 0 1 5.6 1.8" fill="none" stroke="#bdbdbd" stroke-width="1.1"/><rect x="0" y="3.6" width="7.4" height="5.2" rx=".5" fill="#bdbdbd"/><rect x="3.2" y="5.2" width="1.1" height="2.2" fill="#1e1e1e"/></svg>
<div class="t" style="left:116.80px;top:419.53px;font-size:8px;color:#bdbdbd;font-weight:normal;">V3</div>
<svg style="left:133.8px;top:420px;" width="9" height="6.5" viewBox="0 0 9 6.5"><rect x=".5" y=".5" width="5.8" height="5.2" fill="none" stroke="#bdbdbd" stroke-width="1"/><rect x="1" y="2.6" width="4.8" height="1.2" fill="#bdbdbd"/><path d="M6.3 1.6H8V4.6H6.3" fill="none" stroke="#bdbdbd" stroke-width="1"/></svg>
<svg style="left:149.6px;top:420.4px;" width="10" height="6.5" viewBox="0 0 10 6.5"><path d="M.5 3C2.6 -.3 7 -.3 9.1 3C7 6.3 2.6 6.3 .5 3Z" fill="#1e1e1e" stroke="#bdbdbd" stroke-width="1.3"/><circle cx="4.8" cy="3" r="1.3" fill="none" stroke="#bdbdbd" stroke-width=".9"/></svg>
<svg style="left:101.8px;top:446px;" width="8" height="9" viewBox="0 0 8 9"><path d="M1.9 3.8V2.3A1.9 1.9 0 0 1 5.6 1.8" fill="none" stroke="#bdbdbd" stroke-width="1.1"/><rect x="0" y="3.6" width="7.4" height="5.2" rx=".5" fill="#bdbdbd"/><rect x="3.2" y="5.2" width="1.1" height="2.2" fill="#1e1e1e"/></svg>
<div class="t" style="left:116.80px;top:447.53px;font-size:8px;color:#bdbdbd;font-weight:normal;">V2</div>
<svg style="left:133.8px;top:448px;" width="9" height="6.5" viewBox="0 0 9 6.5"><rect x=".5" y=".5" width="5.8" height="5.2" fill="none" stroke="#bdbdbd" stroke-width="1"/><rect x="1" y="2.6" width="4.8" height="1.2" fill="#bdbdbd"/><path d="M6.3 1.6H8V4.6H6.3" fill="none" stroke="#bdbdbd" stroke-width="1"/></svg>
<svg style="left:149.6px;top:448.4px;" width="10" height="6.5" viewBox="0 0 10 6.5"><path d="M.5 3C2.6 -.3 7 -.3 9.1 3C7 6.3 2.6 6.3 .5 3Z" fill="#1e1e1e" stroke="#bdbdbd" stroke-width="1.3"/><circle cx="4.8" cy="3" r="1.3" fill="none" stroke="#bdbdbd" stroke-width=".9"/></svg>
<svg style="left:101.8px;top:475px;" width="8" height="9" viewBox="0 0 8 9"><path d="M1.9 3.8V2.3A1.9 1.9 0 0 1 5.6 1.8" fill="none" stroke="#bdbdbd" stroke-width="1.1"/><rect x="0" y="3.6" width="7.4" height="5.2" rx=".5" fill="#bdbdbd"/><rect x="3.2" y="5.2" width="1.1" height="2.2" fill="#1e1e1e"/></svg>
<div class="a" style="left:113px;top:466px;width:17px;height:27.6px;background:#2d62cf;border-radius:3px"></div>
<div class="t" style="left:116.40px;top:476.53px;font-size:8px;color:#ffffff;font-weight:normal;">V1</div>
<svg style="left:133.8px;top:477px;" width="9" height="6.5" viewBox="0 0 9 6.5"><rect x=".5" y=".5" width="5.8" height="5.2" fill="none" stroke="#bdbdbd" stroke-width="1"/><rect x="1" y="2.6" width="4.8" height="1.2" fill="#bdbdbd"/><path d="M6.3 1.6H8V4.6H6.3" fill="none" stroke="#bdbdbd" stroke-width="1"/></svg>
<svg style="left:149.6px;top:477.4px;" width="10" height="6.5" viewBox="0 0 10 6.5"><path d="M.5 3C2.6 -.3 7 -.3 9.1 3C7 6.3 2.6 6.3 .5 3Z" fill="#1e1e1e" stroke="#bdbdbd" stroke-width="1.3"/><circle cx="4.8" cy="3" r="1.3" fill="none" stroke="#bdbdbd" stroke-width=".9"/></svg>
<svg style="left:101.8px;top:506px;" width="8" height="9" viewBox="0 0 8 9"><path d="M1.9 3.8V2.3A1.9 1.9 0 0 1 5.6 1.8" fill="none" stroke="#bdbdbd" stroke-width="1.1"/><rect x="0" y="3.6" width="7.4" height="5.2" rx=".5" fill="#bdbdbd"/><rect x="3.2" y="5.2" width="1.1" height="2.2" fill="#1e1e1e"/></svg>
<div class="a" style="left:113px;top:497.4px;width:17px;height:27.6px;background:#2d62cf;border-radius:3px"></div>
<div class="t" style="left:116.40px;top:507.53px;font-size:8px;color:#ffffff;font-weight:normal;">A1</div>
<svg style="left:133.8px;top:508px;" width="9" height="6.5" viewBox="0 0 9 6.5"><rect x=".5" y=".5" width="5.8" height="5.2" fill="none" stroke="#bdbdbd" stroke-width="1"/><rect x="1" y="2.6" width="4.8" height="1.2" fill="#bdbdbd"/><path d="M6.3 1.6H8V4.6H6.3" fill="none" stroke="#bdbdbd" stroke-width="1"/></svg>
<div class="t" style="left:151.80px;top:508.07px;font-size:7px;color:#8e8e8e;font-weight:normal;-webkit-text-stroke:0.1px currentColor">M</div>
<div class="t" style="left:169.20px;top:508.07px;font-size:7px;color:#8e8e8e;font-weight:normal;-webkit-text-stroke:0.1px currentColor">S</div>
<svg style="left:184.5px;top:506.5px;" width="6.5" height="9.5" viewBox="0 0 6.5 9.5"><rect x="1.5" y="0" width="3.5" height="6" rx="1.75" fill="#8e8e8e"/><path d="M.5 4.5A2.75 2.75 0 0 0 6 4.5M3.25 7.3V9M1.5 9H5" fill="none" stroke="#8e8e8e" stroke-width="1"/></svg>
<svg style="left:101.8px;top:534.5px;" width="8" height="9" viewBox="0 0 8 9"><path d="M1.9 3.8V2.3A1.9 1.9 0 0 1 5.6 1.8" fill="none" stroke="#bdbdbd" stroke-width="1.1"/><rect x="0" y="3.6" width="7.4" height="5.2" rx=".5" fill="#bdbdbd"/><rect x="3.2" y="5.2" width="1.1" height="2.2" fill="#1e1e1e"/></svg>
<div class="a" style="left:113px;top:526px;width:17px;height:30px;background:#2d62cf;border-radius:3px"></div>
<div class="t" style="left:116.40px;top:536.03px;font-size:8px;color:#ffffff;font-weight:normal;">A2</div>
<svg style="left:133.8px;top:536.5px;" width="9" height="6.5" viewBox="0 0 9 6.5"><rect x=".5" y=".5" width="5.8" height="5.2" fill="none" stroke="#bdbdbd" stroke-width="1"/><rect x="1" y="2.6" width="4.8" height="1.2" fill="#bdbdbd"/><path d="M6.3 1.6H8V4.6H6.3" fill="none" stroke="#bdbdbd" stroke-width="1"/></svg>
<div class="t" style="left:151.80px;top:536.57px;font-size:7px;color:#8e8e8e;font-weight:normal;-webkit-text-stroke:0.1px currentColor">M</div>
<div class="t" style="left:169.20px;top:536.57px;font-size:7px;color:#8e8e8e;font-weight:normal;-webkit-text-stroke:0.1px currentColor">S</div>
<svg style="left:184.5px;top:535.0px;" width="6.5" height="9.5" viewBox="0 0 6.5 9.5"><rect x="1.5" y="0" width="3.5" height="6" rx="1.75" fill="#8e8e8e"/><path d="M.5 4.5A2.75 2.75 0 0 0 6 4.5M3.25 7.3V9M1.5 9H5" fill="none" stroke="#8e8e8e" stroke-width="1"/></svg>
<div class="a" style="left:635px;top:391px;width:8px;height:9px;background:#2e2e2e;"></div>
<div class="a" style="left:635px;top:399.5px;width:8px;height:88px;background:#4b4b4b;"></div>
<div class="a" style="left:635px;top:504px;width:8px;height:47px;background:#4b4b4b;"></div>
<svg style="left:634.75px;top:395.25px;" width="8.5" height="8.5" viewBox="0 0 8.5 8.5"><circle cx="4.25" cy="4.25" r="3.5" fill="#161616" stroke="#d6d6d6" stroke-width="1.5"/></svg>
<svg style="left:634.75px;top:483.25px;" width="8.5" height="8.5" viewBox="0 0 8.5 8.5"><circle cx="4.25" cy="4.25" r="3.5" fill="#161616" stroke="#d6d6d6" stroke-width="1.5"/></svg>
<svg style="left:634.75px;top:499.75px;" width="8.5" height="8.5" viewBox="0 0 8.5 8.5"><circle cx="4.25" cy="4.25" r="3.5" fill="#161616" stroke="#d6d6d6" stroke-width="1.5"/></svg>
<div class="a" style="left:667px;top:348.8px;width:7px;height:5px;background:#050505;"></div>
<div class="a" style="left:675px;top:348.8px;width:6px;height:5px;background:#050505;"></div>
<div class="a" style="left:667px;top:355px;width:14px;height:196px;background:#030303;"></div>
</body></html>
